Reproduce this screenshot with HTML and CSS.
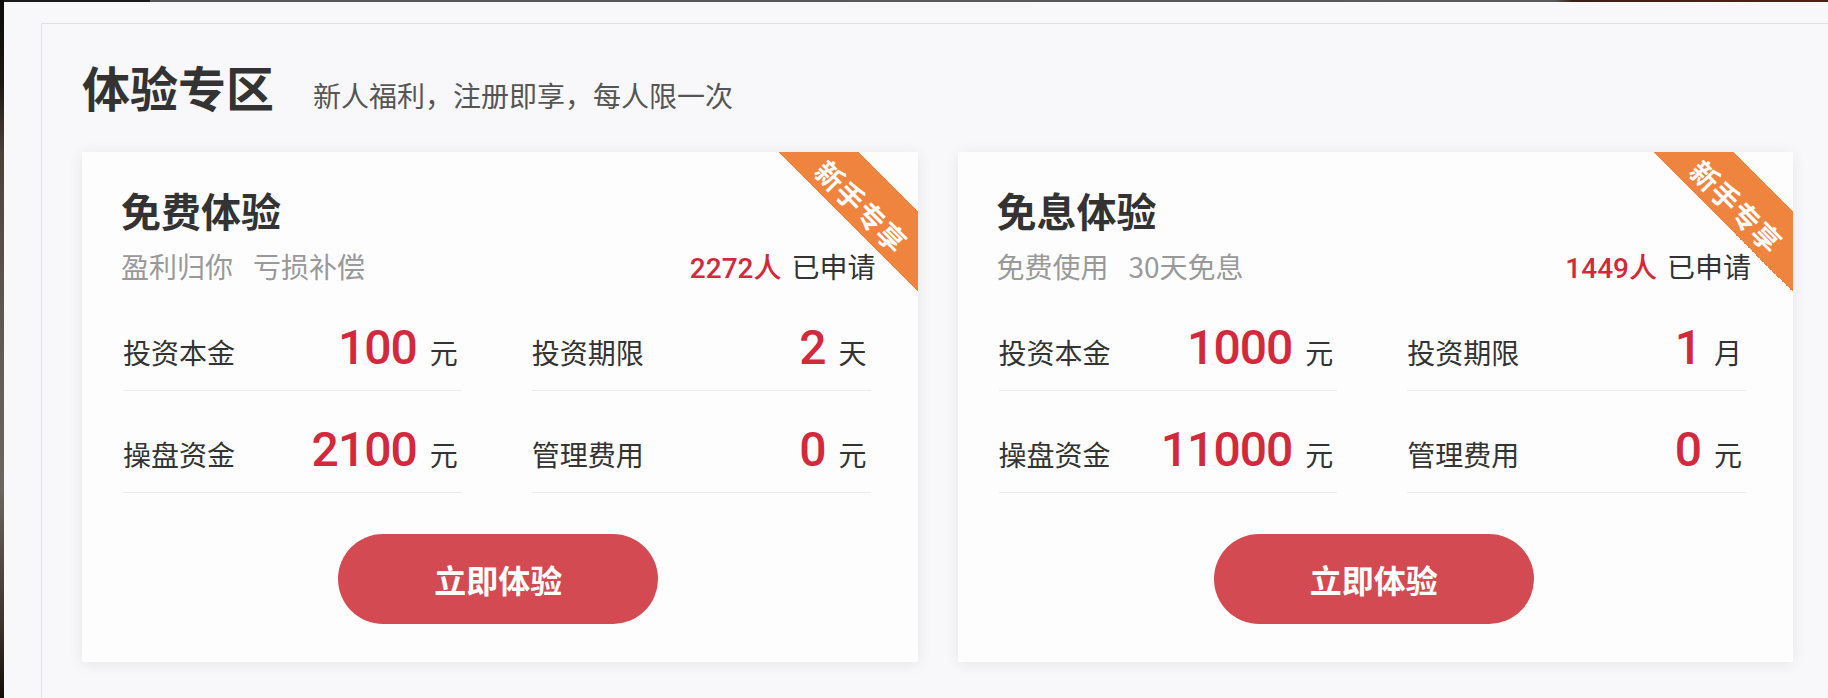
FILE: index.html
```html
<!DOCTYPE html>
<html lang="zh-CN">
<head>
<meta charset="utf-8">
<title>体验专区</title>
<link rel="stylesheet" href="styles.css">
</head>
<body>
<div class="page">
  <div class="edge"></div>
  <div class="content">
    <div class="topbar"></div>
    <section class="panel">
      <header class="head">
        <h1>体验专区</h1>
        <p>新人福利，注册即享，每人限一次</p>
      </header>
      <div class="cards">
        <div class="card">
          <div class="ribbon"><span>新手专享</span></div>
          <h2>免费体验</h2>
          <div class="meta">
            <div class="tags"><span>盈利归你</span><span>亏损补偿</span></div>
            <div class="applied"><b>2272人</b><span>已申请</span></div>
          </div>
          <div class="grid">
            <div class="cell"><span class="label">投资本金</span><span class="val"><em>100</em><i>元</i></span></div>
            <div class="cell"><span class="label">投资期限</span><span class="val"><em>2</em><i>天</i></span></div>
            <div class="cell"><span class="label">操盘资金</span><span class="val"><em>2100</em><i>元</i></span></div>
            <div class="cell"><span class="label">管理费用</span><span class="val"><em>0</em><i>元</i></span></div>
          </div>
          <div class="actions"><button class="btn">立即体验</button></div>
        </div>
        <div class="card">
          <div class="ribbon"><span>新手专享</span></div>
          <h2>免息体验</h2>
          <div class="meta">
            <div class="tags"><span>免费使用</span><span>30天免息</span></div>
            <div class="applied"><b>1449人</b><span>已申请</span></div>
          </div>
          <div class="grid">
            <div class="cell"><span class="label">投资本金</span><span class="val"><em>1000</em><i>元</i></span></div>
            <div class="cell"><span class="label">投资期限</span><span class="val"><em>1</em><i>月</i></span></div>
            <div class="cell"><span class="label">操盘资金</span><span class="val"><em>11000</em><i>元</i></span></div>
            <div class="cell"><span class="label">管理费用</span><span class="val"><em>0</em><i>元</i></span></div>
          </div>
          <div class="actions"><button class="btn">立即体验</button></div>
        </div>
      </div>
    </section>
  </div>
</div>
</body>
</html>
```
FILE: styles.css
```css
html, body {
  margin: 0;
  padding: 0;
}
body {
  background: #f8f8fa;
  font-family: "Noto Sans CJK SC", "Noto Sans", sans-serif;
  color: #333;
  overflow: hidden;
}
.page {
  display: flex;
  height: 698px;
  overflow: hidden;
}
.edge {
  flex: 0 0 4px;
  background: linear-gradient(#0d0b0a 0%, #1c1815 12%, #4d4238 22%, #5e5850 45%, #6a665f 70%, #3d3128 90%, #110d0b 100%);
}
.content {
  flex: 1;
  min-width: 0;
}
.topbar {
  height: 2px;
  background: linear-gradient(90deg, #1b1b1b 0, #1b1b1b 8%, #585858 8%, #5a5a5a 85%, #3a2018 86%, #5a1a14 100%);
}
.panel {
  margin: 21px 0 0 37px;
  width: 1711px;
  padding: 38px 40px 80px 40px;
  border: 1px solid #dde3ee;
  background: #f8f8fa;
}
.head {
  display: flex;
  align-items: baseline;
}
.head h1 {
  margin: 0;
  font-size: 48px;
  line-height: 48px;
  font-weight: 700;
  color: #333;
}
.head p {
  margin: 0 0 0 39px;
  font-size: 28px;
  line-height: 28px;
  color: #555;
}
.cards {
  display: flex;
  gap: 40px;
  margin-top: 42px;
}
.card {
  position: relative;
  overflow: hidden;
  flex: 1;
  background: #fdfdfe;
  box-shadow: 0 2px 14px rgba(0, 0, 0, 0.08);
  padding: 38px 42px 38px 39px;
}
.ribbon {
  position: absolute;
  top: 0;
  right: 0;
  width: 140px;
  height: 140px;
  background: linear-gradient(45deg, transparent 50%, #ef843e 50%, #ef843e 78.6%, transparent 78.6%);
}
.ribbon span {
  position: absolute;
  left: 84px;
  top: 54px;
  white-space: nowrap;
  color: #fff;
  font-size: 28px;
  line-height: 28px;
  font-weight: 700;
  letter-spacing: 1px;
  transform: translate(-50%, -50%) rotate(45deg);
}
.card h2 {
  margin: 0;
  font-size: 40px;
  line-height: 40px;
  font-weight: 700;
  color: #333;
}
.meta {
  display: flex;
  justify-content: space-between;
  align-items: baseline;
  margin-top: 22px;
  font-size: 28px;
  line-height: 28px;
}
.tags {
  color: #999;
}
.tags span + span {
  margin-left: 20px;
}
.applied {
  position: relative;
  z-index: 1;
  color: #333;
}
.applied b {
  font-family: "Roboto", "Noto Sans CJK SC", sans-serif;
  font-weight: 500;
  color: #d3293c;
  margin-right: 10px;
}
.grid {
  display: grid;
  grid-template-columns: 1fr 1fr;
  column-gap: 70px;
  margin: 6px 5px 0 2px;
}
.cell {
  display: flex;
  justify-content: space-between;
  align-items: baseline;
  padding: 35px 4px 14px 0;
  border-bottom: 1px solid #ebebed;
  font-size: 28px;
  line-height: 48px;
}
.label {
  color: #333;
}
.val em {
  font-style: normal;
  font-family: "Roboto", "Liberation Sans", sans-serif;
  font-size: 48px;
  font-weight: 500;
  letter-spacing: -1px;
  color: #d3293c;
}
.val i {
  font-style: normal;
  color: #333;
  margin-left: 13px;
}
.actions {
  display: flex;
  justify-content: center;
  margin-top: 41px;
}
.btn {
  width: 320px;
  height: 90px;
  border: none;
  border-radius: 45px;
  background: #d34a53;
  color: #fff;
  font-family: "Noto Sans CJK SC", sans-serif;
  font-size: 32px;
  font-weight: 700;
  padding: 0;
}
```
